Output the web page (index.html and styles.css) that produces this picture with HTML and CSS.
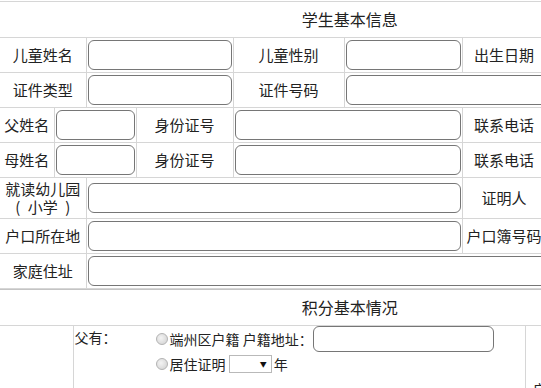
FILE: index.html
```html
<!DOCTYPE html>
<html lang="zh-CN">
<head>
    <meta charset="UTF-8">
    <meta name="viewport" content="width=device-width, initial-scale=1.0">
    <title>学生信息登记</title>
    <link rel="stylesheet" href="styles.css">
</head>
<body>
    <!-- 学生基本信息 -->
    <table class="info">
        <colgroup>
            <col class="c1"><col class="c2"><col class="c3"><col class="c4">
            <col class="c5"><col class="c6"><col class="c7"><col class="c8">
        </colgroup>
        <tr>
            <td colspan="8" class="title">学生基本信息</td>
        </tr>
        <tr>
            <td colspan="2">儿童姓名</td>
            <td colspan="2" class="field"><input type="text"></td>
            <td>儿童性别</td>
            <td class="field"><input type="text"></td>
            <td>出生日期</td>
            <td class="field"><input type="text"></td>
        </tr>
        <tr>
            <td colspan="2">证件类型</td>
            <td colspan="2" class="field"><input type="text"></td>
            <td>证件号码</td>
            <td colspan="3" class="field"><input type="text"></td>
        </tr>
        <tr>
            <td>父姓名</td>
            <td colspan="2" class="field"><input type="text"></td>
            <td>身份证号</td>
            <td colspan="2" class="field"><input type="text"></td>
            <td>联系电话</td>
            <td class="field"><input type="text"></td>
        </tr>
        <tr>
            <td>母姓名</td>
            <td colspan="2" class="field"><input type="text"></td>
            <td>身份证号</td>
            <td colspan="2" class="field"><input type="text"></td>
            <td>联系电话</td>
            <td class="field"><input type="text"></td>
        </tr>
        <tr>
            <td colspan="2">就读幼儿园<br>(&ensp;小学&ensp;)</td>
            <td colspan="4" class="field"><input type="text"></td>
            <td>证明人</td>
            <td class="field"><input type="text"></td>
        </tr>
        <tr>
            <td colspan="2">户口所在地</td>
            <td colspan="4" class="field"><input type="text"></td>
            <td>户口簿号码</td>
            <td class="field"><input type="text"></td>
        </tr>
        <tr>
            <td colspan="2">家庭住址</td>
            <td colspan="6" class="field"><input type="text"></td>
        </tr>
    </table>

    <!-- 积分基本情况 -->
    <table class="score">
        <colgroup>
            <col class="s1"><col class="s2"><col class="s3">
        </colgroup>
        <tr>
            <td colspan="3" class="title">积分基本情况</td>
        </tr>
        <tr class="tall">
            <td></td>
            <td class="options">
                <div class="opt-row">
                    <div class="who">父有：</div>
                    <div class="choices">
                        <div class="line first"><span class="radio"></span><span>端州区户籍 户籍地址：</span><input type="text" class="addr"></div>
                        <div class="line"><span class="radio"></span><span>居住证明&nbsp;</span><span class="pick"><select><option></option></select></span><span>年</span></div>
                    </div>
                </div>
            </td>
            <td class="side">户籍积分</td>
        </tr>
    </table>
</body>
</html>
```

FILE: styles.css
```css
/* Dasar halaman */
html {
    overflow: hidden;
}
body {
    margin: 0;
    padding-top: 1px;
    font-family: "Noto Sans CJK SC", sans-serif;
    color: #222;
    background-color: #fff;
}
/* Tabel */
table {
    border-collapse: collapse;
    table-layout: fixed;
    width: 700px;
}
td {
    border: 1px solid #d6d6d6;
    padding: 2px 1px;
    font-size: 15px;
    line-height: 18px;
    text-align: center;
}
td:first-child {
    border-left: none;
}
.title {
    font-size: 16px;
    line-height: 19px;
    padding: 8px 0;
}
.c1 { width: 54px; }
.c2 { width: 32px; }
.c3 { width: 50px; }
.c4 { width: 97px; }
.c5 { width: 111px; }
.c6 { width: 118px; }
.c7 { width: 84px; }
.c8 { width: 154px; }
.s1 { width: 73px; }
.s2 { width: 452px; }
.s3 { width: 175px; }
/* Input */
input[type="text"] {
    box-sizing: border-box;
    width: 100%;
    height: 30px;
    margin: 0;
    border: 1px solid #767676;
    border-radius: 6px;
    display: block;
    font-family: inherit;
}
.info {
    border-bottom: 1px solid #c4c4c4;
}
.score .title {
    border-top: 1px solid #c4c4c4;
}
/* Bagian skor */
.tall td {
    height: 121px;
}
.options {
    vertical-align: top;
    text-align: left;
    font-size: 14px;
    padding: 0 1px;
}
.opt-row {
    display: flex;
}
.who {
    width: 81px;
    line-height: 20px;
    padding-top: 1px;
}
.choices {
    display: flex;
    flex-direction: column;
}
.line {
    display: flex;
    align-items: center;
    height: 22px;
    white-space: nowrap;
}
.line.first {
    height: 27px;
    align-items: flex-start;
    line-height: 26px;
}
.line.first .radio {
    margin-top: 7px;
}
.radio {
    display: inline-block;
    width: 10px;
    height: 10px;
    border: 1px solid #b4b4b4;
    border-radius: 50%;
    background: radial-gradient(circle at 40% 40%, #f4f4f4, #cfcfcf);
    margin-right: 2px;
}
input.addr {
    width: 181px;
    height: 26px;
    border-radius: 6px;
    display: inline-block;
}
.pick {
    position: relative;
    display: inline-block;
    margin-right: 2px;
}
.pick select {
    appearance: none;
    width: 43px;
    height: 18px;
    border: 1px solid #b9b9b9;
    border-radius: 0;
    background-color: #fff;
    display: block;
}
.pick::after {
    content: "▼";
    position: absolute;
    right: 5px;
    top: 3px;
    font-size: 7px;
    line-height: 12px;
    color: #111;
}
.side {
    text-align: left;
    font-size: 14px;
    padding-left: 7px;
}
```
